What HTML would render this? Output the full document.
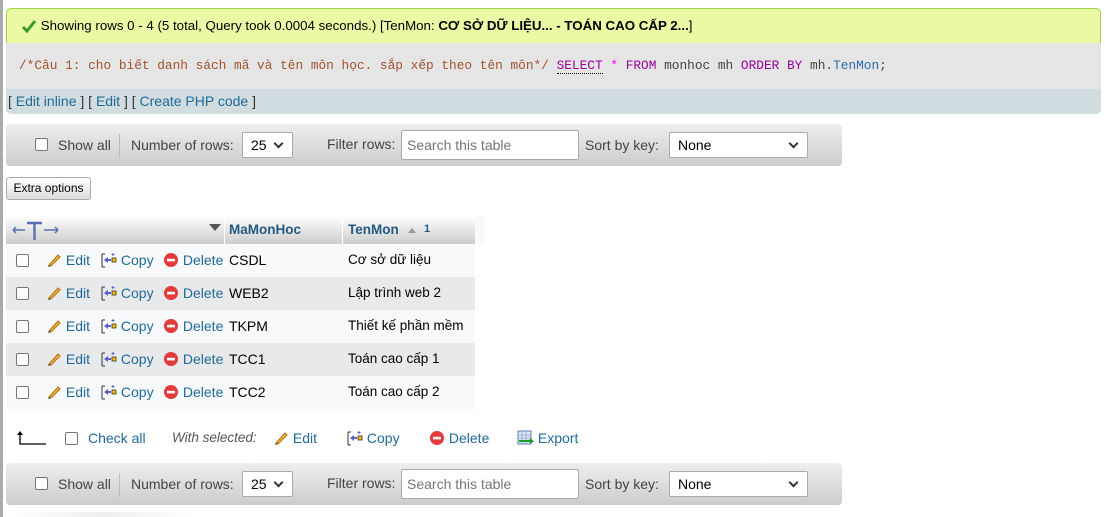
<!DOCTYPE html>
<html><head><meta charset="utf-8">
<style>
*{box-sizing:border-box;margin:0;padding:0}
body{width:1105px;height:517px;overflow:hidden;background:#fff;font-family:"Liberation Sans",Arial,sans-serif;font-size:14px;color:#444;position:relative}
.a{position:absolute;white-space:nowrap}
a{color:#1f6a98;text-decoration:none}
.lb{position:absolute;left:0;top:0;width:3px;height:517px;background:#aaa}
.ok{left:6px;top:8px;width:1095px;height:35px;background:#ebf8a4;border:1px solid #a2d246;border-bottom:none;border-radius:5px 5px 0 0;color:#000;font-size:13.3px;line-height:34px;padding-left:14px}
.sql{left:6px;top:43px;width:1095px;height:46px;background:#e5e5e5;font-family:"Liberation Mono","DejaVu Sans Mono",monospace;font-size:12.8px;line-height:46px;padding-left:13px;color:#a0522d}
.lk{left:6px;top:89px;width:1095px;height:25px;background:#d0dce0;line-height:25px;padding-left:2px;color:#333;border-radius:0 0 5px 5px}
.tb{left:6px;width:836px;height:42px;background:linear-gradient(#eee,#ccc);border-radius:4px}
.cb{position:absolute;width:13px;height:13px;border:1px solid #767676;border-radius:2px;background:#fff}
.sel{position:absolute;height:26px;border:1px solid #aaa;border-radius:2px;background:#fff;color:#000;line-height:24px;padding-left:8px}
.sel:after{content:"";position:absolute;right:10px;top:7px;width:5px;height:5px;border-right:2px solid #333;border-bottom:2px solid #333;transform:rotate(45deg)}
.inp{position:absolute;height:30px;border:1px solid #aaa;border-radius:2px;background:#fff;color:#757575;line-height:28px;padding-left:5px}
.btn{left:6px;top:177px;width:85px;height:23px;border:1px solid #aaa;border-radius:3px;background:linear-gradient(#fff,#ddd);font-size:12px;color:#000;line-height:21px;text-align:center}
.hd{left:6px;top:216px;width:469px;height:28px;background:linear-gradient(#fff,#ccc)}
.row{position:absolute;left:6px;width:469px;height:33px}
.ic{display:inline-block;vertical-align:-3px}
</style></head><body>
<div class="lb"></div>
<div class="a ok"><svg class="ic" width="16" height="14" viewBox="0 0 16 14"><path d="M2 8 L6 12 L14 2" stroke="#3a9b2a" stroke-width="3" fill="none"/></svg> Showing rows 0 - 4 (5 total, Query took 0.0004 seconds.) [TenMon: <b>CƠ SỞ DỮ LIỆU... - TOÁN CAO CẤP 2...</b>]</div>
<div class="a sql">/*Câu 1: cho biết danh sách mã và tên môn học. sắp xếp theo tên môn*/ <span style="color:#909;border-bottom:1px dotted #000;line-height:14px;display:inline-block">SELECT</span> <span style="color:#f0f">*</span> <span style="color:#909">FROM</span> <span style="color:#444">monhoc mh</span> <span style="color:#909">ORDER BY</span> <span style="color:#444">mh.</span><span style="color:#2d6ab0">TenMon</span><span style="color:#444">;</span></div>
<div class="a lk">[ <a>Edit inline</a> ] [ <a>Edit</a> ] [ <a>Create PHP code</a> ]</div>

<div class="a tb" style="top:124px">
 <div class="cb" style="left:29px;top:14px"></div>
 <div class="a" style="left:52px;top:13px">Show all</div>
 <div class="a" style="left:113px;top:10px;width:1px;height:24px;background:#bbb"></div>
 <div class="a" style="left:125px;top:13px">Number of rows:</div>
 <div class="sel" style="left:236px;top:8px;width:51px">25</div>
 <div class="a" style="left:321px;top:12px">Filter rows:</div>
 <div class="inp" style="left:395px;top:6px;width:178px">Search this table</div>
 <div class="a" style="left:579px;top:13px">Sort by key:</div>
 <div class="sel" style="left:663px;top:8px;width:139px">None</div>
</div>
<div class="a btn">Extra options</div>

<div class="a hd"></div>
<div class="a" style="left:475px;top:216px;width:9px;height:28px;background:#f8f9fa"></div>
<div class="a" style="left:224px;top:216px;width:1px;height:28px;background:#fff"></div>
<div class="a" style="left:342px;top:216px;width:1px;height:28px;background:#fff"></div>
<svg class="a" style="left:11px;top:220px" width="50" height="22" viewBox="0 0 50 22"><path d="M2 10 H14 M2 10 L5 7 M2 10 L5 13" stroke="#5a6fb0" stroke-width="1.5" fill="none"/><path d="M16 3 H31 M23.5 3 V20" stroke="#5a6fb0" stroke-width="2.4" fill="none"/><path d="M33 10 H47 M47 10 L44 7 M47 10 L44 13" stroke="#5a6fb0" stroke-width="1.5" fill="none"/></svg>
<div class="a" style="left:209px;top:224px;width:0;height:0;border-left:6px solid transparent;border-right:6px solid transparent;border-top:7px solid #555"></div>
<div class="a" style="left:229px;top:222px;color:#235a81;font-weight:bold;font-size:13.5px">MaMonHoc</div>
<div class="a" style="left:348px;top:222px;color:#235a81;font-weight:bold;font-size:13.5px">TenMon</div>
<div class="a" style="left:408px;top:228px;width:0;height:0;border-left:4px solid transparent;border-right:4px solid transparent;border-bottom:5px solid #999"></div>
<div class="a" style="left:424px;top:223px;color:#235a81;font-weight:bold;font-size:11px">1</div>

<div class="row" style="top:244px;background:#f8f9fa"></div>
<div class="row" style="top:277px;background:#e8e9eb"></div>
<div class="row" style="top:310px;background:#f8f9fa"></div>
<div class="row" style="top:343px;background:#e8e9eb"></div>
<div class="row" style="top:376px;background:#f8f9fa"></div>

<div id="rows"></div>
<script>
var d=[["CSDL","Cơ sở dữ liệu"],["WEB2","Lập trình web 2"],["TKPM","Thiết kế phần mềm"],["TCC1","Toán cao cấp 1"],["TCC2","Toán cao cấp 2"]];
var pen='<svg class="ic" width="16" height="16" viewBox="0 0 16 16"><path d="M3 13 L12 3 L14 5 L5 14 Z" fill="#f2b53a" stroke="#b07010" stroke-width="1"/><path d="M3 13 L2 15 L5 14" fill="#333"/></svg>';
var cp='<svg class="ic" width="16" height="16" viewBox="0 0 16 16"><path d="M1 2 H4 M1 2 V15 M1 15 H4" stroke="#333" fill="none"/><path d="M3 8 L7 5 V7 H10 V9 H7 V11 Z" fill="#5a5fd0"/><rect x="11" y="6" width="4" height="4" fill="#f4c200" stroke="#333" stroke-width=".8"/><path d="M12 1 V4 M10.5 2.5 H13.5" stroke="#5a5fd0"/></svg>';
var dl='<svg class="ic" width="16" height="16" viewBox="0 0 16 16"><circle cx="8" cy="8" r="7" fill="#e23b3b"/><rect x="4" y="6.8" width="8" height="2.6" fill="#fff"/></svg>';
var h='';
for(var i=0;i<5;i++){var t=244+i*33;
h+='<div class="cb" style="left:16px;top:'+(t+10)+'px"></div>';
h+='<div class="a" style="left:46px;top:'+(t+8)+'px"><a>'+pen+' Edit</a></div>';
h+='<div class="a" style="left:101px;top:'+(t+8)+'px"><a>'+cp+' Copy</a></div>';
h+='<div class="a" style="left:163px;top:'+(t+8)+'px"><a>'+dl+' Delete</a></div>';
h+='<div class="a" style="left:229px;top:'+(t+8)+'px;color:#000">'+d[i][0]+'</div>';
h+='<div class="a" style="left:348px;top:'+(t+8)+'px;color:#000;font-size:13.5px">'+d[i][1]+'</div>';}
var b=430;
h+='<svg class="a" style="left:16px;top:'+b+'px" width="32" height="16"><path d="M4 2 V14 H30" stroke="#000" fill="none" stroke-width="1.3"/><path d="M1 5 L4 1 L7 5 Z" fill="#000"/></svg>';
h+='<div class="cb" style="left:65px;top:'+(b+2)+'px"></div>';
h+='<div class="a" style="left:88px;top:'+b+'px"><a>Check all</a></div>';
h+='<div class="a" style="left:172px;top:'+b+'px;font-style:italic;color:#555;font-size:13.5px">With selected:</div>';
h+='<div class="a" style="left:273px;top:'+b+'px"><a>'+pen+' Edit</a></div>';
h+='<div class="a" style="left:347px;top:'+b+'px"><a>'+cp+' Copy</a></div>';
h+='<div class="a" style="left:429px;top:'+b+'px"><a>'+dl+' Delete</a></div>';
h+='<div class="a" style="left:517px;top:'+b+'px"><a><svg class="ic" width="17" height="16" viewBox="0 0 17 16"><rect x="1" y="1" width="13" height="13" fill="#dfe8f5" stroke="#5b7fb5"/><path d="M1 5 H14 M1 8 H14 M5 1 V14 M9 1 V14" stroke="#8aa7cf" stroke-width=".8"/><path d="M2 11 H15 L13 9 M15 11 L13 13" stroke="#1c9a2c" stroke-width="2" fill="none"/></svg> Export</a></div>';
document.getElementById('rows').innerHTML=h;
</script>

<div class="a tb" style="top:463px">
 <div class="cb" style="left:29px;top:14px"></div>
 <div class="a" style="left:52px;top:13px">Show all</div>
 <div class="a" style="left:113px;top:10px;width:1px;height:24px;background:#bbb"></div>
 <div class="a" style="left:125px;top:13px">Number of rows:</div>
 <div class="sel" style="left:236px;top:8px;width:51px">25</div>
 <div class="a" style="left:321px;top:12px">Filter rows:</div>
 <div class="inp" style="left:395px;top:6px;width:178px">Search this table</div>
 <div class="a" style="left:579px;top:13px">Sort by key:</div>
 <div class="sel" style="left:663px;top:8px;width:139px">None</div>
</div>
<div class="a" style="left:12px;top:512px;width:180px;height:5px;background:linear-gradient(90deg,#fff,#eee,#fff)"></div>
</body></html>
